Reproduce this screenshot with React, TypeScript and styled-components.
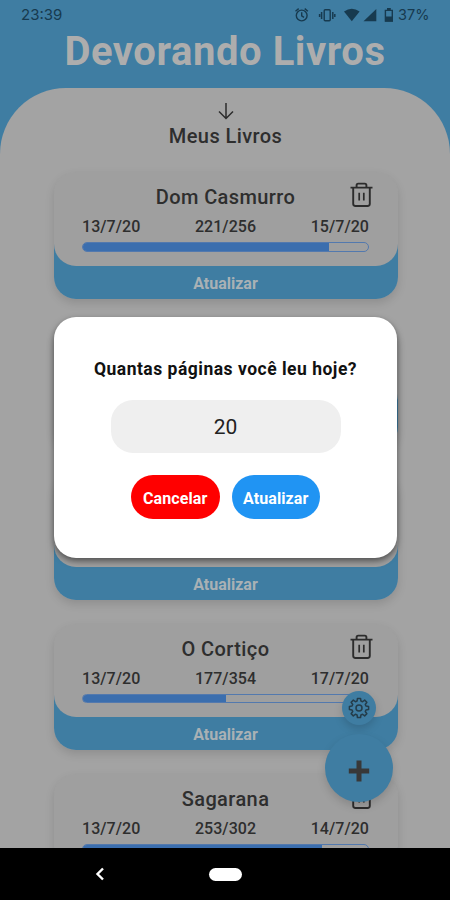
import React from 'react';
import styled, { createGlobalStyle } from 'styled-components';

const color = {
  sky: '#3f7da2',
  sheet: '#a3a3a3',
  card: '#9f9f9f',
  ink: '#2e2e2e',
  bar: '#3b6eae',
};

const Global = createGlobalStyle`
  * { box-sizing: border-box; }
  body { margin: 0; background: #000; font-family: Roboto, sans-serif; }
  button, input { font-family: inherit; border: 0; padding: 0; margin: 0; }
`;

const Phone = styled.div`
  position: relative;
  width: 450px;
  height: 900px;
  display: flex;
  flex-direction: column;
  overflow: hidden;
`;

const Screen = styled.main`
  position: relative;
  flex: 0 0 848px;
  display: flex;
  flex-direction: column;
  overflow: hidden;
  background: ${color.sky};
`;

const StatusBar = styled.div`
  flex: 0 0 28px;
  display: flex;
  align-items: center;
  justify-content: space-between;
  padding: 1px 21px 0 21px;
  font: 400 15px Inter, sans-serif;
  letter-spacing: 0;
  color: #173a4f;
`;

const StatusIcons = styled.div`
  display: flex;
  align-items: center;
  height: 16px;
  svg { display: block; }
`;

const Percent = styled.span`
  width: 31px;
  white-space: nowrap;
  font-size: 14.5px;
`;

const AppTitle = styled.h1`
  flex: 0 0 60px;
  margin: 0;
  text-align: center;
  font-size: 40px;
  line-height: 48px;
  font-weight: 700;
  letter-spacing: 0.55px;
  color: #adadad;
`;

const Sheet = styled.section`
  flex: 1 0 auto;
  display: flex;
  flex-direction: column;
  align-items: center;
  padding: 15px 0 0 1px;
  border-radius: 66px 66px 0 0;
  background: ${color.sheet};
`;

const SheetTitle = styled.h2`
  margin: 2px 0 0;
  height: 50px;
  font-size: 20px;
  line-height: 28px;
  font-weight: 500;
  letter-spacing: 0.4px;
  color: ${color.ink};
`;

const List = styled.div`
  display: flex;
  flex-direction: column;
  gap: 24.1px;
`;

const Card = styled.article`
  width: 344px;
  height: 126.5px;
  border-radius: 22px;
  background: linear-gradient(${color.card} 50%, ${color.sky} 50%);
  box-shadow: 0 4px 10px rgba(0, 0, 0, 0.13);
`;

const CardBody = styled.div`
  position: relative;
  height: 93.5px;
  padding: 12px 28.5px 0;
  border-radius: 22px;
  background: ${color.card};
`;

const BookTitle = styled.h3`
  margin: 0;
  text-align: center;
  font-size: 20px;
  line-height: 27px;
  font-weight: 500;
  letter-spacing: 0.4px;
  color: ${color.ink};
`;

const Trash = styled.svg`
  position: absolute;
  right: 24px;
  top: 10px;
`;

const Figures = styled.div`
  display: flex;
  justify-content: space-between;
  padding-top: 6px;
  font-size: 16px;
  line-height: 20px;
  font-weight: 500;
  letter-spacing: 0.05px;
  color: ${color.ink};
`;

const Progress = styled.div`
  margin-top: 5px;
  height: 9.5px;
  border: 1px solid #5379ae;
  border-radius: 5px;
  overflow: hidden;
`;

const ProgressFill = styled.div`
  height: 100%;
  background: ${color.bar};
`;

const UpdateRow = styled.button`
  display: block;
  width: 100%;
  height: 33px;
  padding-top: 2px;
  background: none;
  font-size: 16px;
  font-weight: 700;
  color: #a9b1b5;
`;

const Round = styled.button<{ $size: number; $right: number; $bottom: number }>`
  position: absolute;
  right: ${p => p.$right}px;
  bottom: ${p => p.$bottom}px;
  width: ${p => p.$size}px;
  height: ${p => p.$size}px;
  display: flex;
  align-items: center;
  justify-content: center;
  border-radius: 50%;
  background: ${color.sky};
  box-shadow: 0 4px 9px rgba(0, 0, 0, 0.15);
`;

const NavBar = styled.nav`
  flex: 0 0 52px;
  display: grid;
  grid-template-columns: 200px 50px 200px;
  align-items: center;
  justify-items: center;
  background: #000;
`;

const HomePill = styled.div`
  width: 33px;
  height: 13px;
  border-radius: 7px;
  background: #fff;
`;

const Dialog = styled.div`
  position: absolute;
  left: 54px;
  top: 317px;
  width: 343px;
  height: 241px;
  display: flex;
  flex-direction: column;
  align-items: center;
  padding-top: 40px;
  border-radius: 22px;
  background: #fff;
  box-shadow: 0 3px 6px rgba(0, 0, 0, 0.5);
`;

const Question = styled.p`
  margin: 0;
  font-size: 17.5px;
  line-height: 24px;
  font-weight: 700;
  letter-spacing: 0.5px;
  white-space: nowrap;
  color: #111;
`;

const PagesInput = styled.input`
  width: 230px;
  height: 53px;
  margin-top: 18.5px;
  border-radius: 22px;
  background: #efefef;
  text-align: center;
  font-size: 21px;
  color: #222;
  padding-top: 2px;
`;

const Actions = styled.div`
  display: flex;
  gap: 12px;
  margin-top: 22.5px;
`;

const Action = styled.button<{ $fill: string }>`
  width: 88.5px;
  height: 44px;
  border-radius: 22px;
  background: ${p => p.$fill};
  color: #fff;
  font-size: 16px;
  font-weight: 700;
  letter-spacing: 0.1px;
  padding-top: 2px;
`;

type Book = { title: string; start: string; end: string; read: number; total: number };
type Entry = { id: number; book?: Book; action?: boolean };

const entries: Entry[] = [
  { id: 1, book: { title: 'Dom Casmurro', start: '13/7/20', end: '15/7/20', read: 221, total: 256 }, action: true },
  { id: 2 },
  { id: 3, action: true },
  { id: 4, book: { title: 'O Cortiço', start: '13/7/20', end: '17/7/20', read: 177, total: 354 }, action: true },
  { id: 5, book: { title: 'Sagarana', start: '13/7/20', end: '14/7/20', read: 253, total: 302 } },
];

const TrashIcon = () => (
  <Trash width="25" height="26" viewBox="0 0 25 26" fill="none" stroke="#2c2c2c" strokeWidth="1.9">
    <path d="M1.5 5.6H23.5M4.2 5.6V21.8Q4.2 24 6.4 24H18.6Q20.8 24 20.8 21.8V5.6M7.6 5.5V3.2Q7.6 1.6 9.2 1.6H15.8Q17.4 1.6 17.4 3.2V5.5" />
    <path d="M10.2 10.8V18.4M14.8 10.8V18.4" strokeWidth="1.7" />
  </Trash>
);

const gearPath = (() => {
  const pts: string[] = [];
  for (let i = 0; i < 8; i++) {
    const c = (i * Math.PI) / 4;
    ([[-0.27, 7.2], [-0.16, 9.7], [0.16, 9.7], [0.27, 7.2]] as const).forEach(([a, r]) => {
      pts.push(`${(11 + r * Math.sin(c + a)).toFixed(2)} ${(11 - r * Math.cos(c + a)).toFixed(2)}`);
    });
  }
  return `M${pts.join('L')}Z`;
})();

function BookCard({ book, action }: Entry) {
  return (
    <Card>
      <CardBody>
        {book && (
          <>
            <BookTitle>{book.title}</BookTitle>
            <TrashIcon />
            <Figures>
              <span>{book.start}</span>
              <span>{book.read}/{book.total}</span>
              <span>{book.end}</span>
            </Figures>
            <Progress>
              <ProgressFill style={{ width: `${(book.read / book.total) * 100}%` }} />
            </Progress>
          </>
        )}
      </CardBody>
      {action && <UpdateRow>Atualizar</UpdateRow>}
    </Card>
  );
}

export default function App() {
  return (
    <Phone>
      <Global />
      <Screen>
        <StatusBar>
          <span>23:39</span>
          <StatusIcons>
            <svg width="104" height="16" viewBox="294 6 104 16" fill="none" stroke="#173a4f" strokeWidth="1.4">
              <circle cx="301.7" cy="14.5" r="5.4" />
              <path d="M301.7 11.2V14.8L304 16.3M295.5 10.2L298.7 7.6M304.7 7.6L307.9 10.2" />
              <rect x="324.2" y="8.8" width="6" height="11" rx="1" />
              <path d="M321.6 11V18M332.8 11V18M319.6 13V16M334.8 13V16" strokeWidth="1.5" />
              <path d="M344 10.5Q351.8 4.8 359.6 10.5L351.8 20.3Z" fill="#173a4f" stroke="none" />
              <path d="M363.5 20.3L376.3 8V20.3Z" fill="#173a4f" stroke="none" />
              <path d="M385.4 9.4H392.3V20H385.4Z" />
              <path d="M387 7H390.8V9H387ZM385 15.5H393V20.6H385Z" fill="#173a4f" stroke="none" />
            </svg>
            <Percent>37%</Percent>
          </StatusIcons>
        </StatusBar>
        <AppTitle>Devorando Livros</AppTitle>
        <Sheet>
          <svg width="16" height="17" viewBox="0 0 16 17" fill="none" stroke="#2c2c2c" strokeWidth="1.5">
            <path d="M8 0V15.5M1 8.5L8 15.5L15 8.5" />
          </svg>
          <SheetTitle>Meus Livros</SheetTitle>
          <List>
            {entries.map(entry => <BookCard key={entry.id} {...entry} />)}
          </List>
        </Sheet>
        <Round $size={34} $right={74.5} $bottom={123.5} aria-label="Configurações">
          <svg width="22" height="22" viewBox="0 0 22 22" fill="none" stroke="#243c49" strokeWidth="1.5" strokeLinejoin="round">
            <path d={gearPath} />
            <circle cx="11" cy="11" r="3" />
          </svg>
        </Round>
        <Round $size={68} $right={57} $bottom={46} aria-label="Adicionar">
          <svg width="22" height="28" viewBox="0 0 22 28" fill="none" stroke="#383838" strokeWidth="5">
            <path d="M11 6.5V27.5M0.8 17H21.2" />
          </svg>
        </Round>
      </Screen>
      <NavBar>
        <svg width="10" height="14" viewBox="0 0 10 14" fill="none" stroke="#fff" strokeWidth="2.4">
          <path d="M8 1.5L2.5 7L8 12.5" />
        </svg>
        <HomePill />
      </NavBar>
      <Dialog role="dialog">
        <Question>Quantas páginas você leu hoje?</Question>
        <PagesInput defaultValue="20" />
        <Actions>
          <Action $fill="#ff0000">Cancelar</Action>
          <Action $fill="#2094f3">Atualizar</Action>
        </Actions>
      </Dialog>
    </Phone>
  );
}
